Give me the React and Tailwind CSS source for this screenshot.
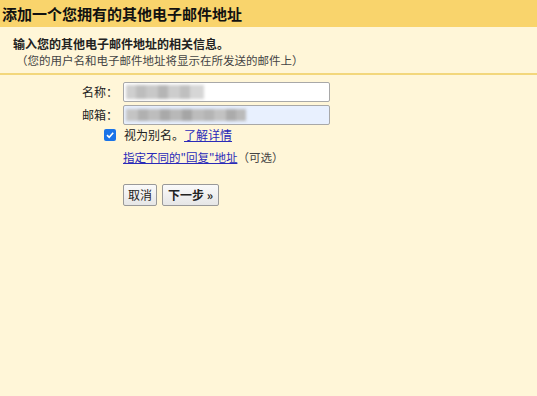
export default function App() {
  return (
    <div
      className="h-[396px] w-[537px] overflow-hidden bg-[#fff6d8] text-[#222]"
      style={{ fontFamily: '"Noto Sans CJK SC", "Liberation Sans", sans-serif' }}
    >
      <div className="flex h-[27px] items-center bg-[#f9d46c] pl-[2px]">
        <h1 className="text-[15px] font-bold leading-none text-[#111]">添加一个您拥有的其他电子邮件地址</h1>
      </div>

      <div className="border-b-2 border-[#f3d77c] pb-[5px] pl-[13px] pt-[9px]">
        <p className="text-[12px] font-bold leading-[16px]">输入您的其他电子邮件地址的相关信息。</p>
        <p className="pl-[3px] text-[11.5px] leading-[16px] text-[#444]">（您的用户名和电子邮件地址将显示在所发送的邮件上）</p>
      </div>

      <div className="flex flex-col pl-[82px] pt-[7px] text-[12px]">
        <div className="flex items-center gap-[5px]">
          <span className="w-[36px] shrink-0 whitespace-nowrap text-right">名称：</span>
          <div className="relative h-[20px] w-[207px] overflow-hidden rounded-[2px] border border-[#a8a8a8] bg-white">
            <div className="flex h-full items-center gap-0 pl-[2px] blur-[1.5px]">
              <span className="h-[14px] w-[10px] bg-[#cfcfcf]" />
              <span className="h-[14px] w-[10px] bg-[#bdbdbd]" />
              <span className="h-[14px] w-[12px] bg-[#c8c8c8]" />
              <span className="h-[14px] w-[10px] bg-[#b5b5b5]" />
              <span className="h-[14px] w-[12px] bg-[#cdcdcd]" />
              <span className="h-[14px] w-[10px] bg-[#bfbfbf]" />
              <span className="h-[14px] w-[14px] bg-[#d6d6d6]" />
            </div>
          </div>
        </div>
        <div className="mt-[3px] flex items-center gap-[5px]">
          <span className="w-[36px] shrink-0 whitespace-nowrap text-right">邮箱：</span>
          <div className="relative h-[20px] w-[207px] overflow-hidden rounded-[2px] border border-[#a8a8a8] bg-[#e8f0fe]">
            <div className="flex h-full items-center pl-[2px] blur-[1.5px]">
              <span className="h-[12px] w-[12px] bg-[#c4c4c4]" />
              <span className="h-[12px] w-[10px] bg-[#b0b0b0]" />
              <span className="h-[12px] w-[12px] bg-[#bdbdbd]" />
              <span className="h-[12px] w-[10px] bg-[#a9a9a9]" />
              <span className="h-[12px] w-[12px] bg-[#b8b8b8]" />
              <span className="h-[12px] w-[10px] bg-[#a5a5a5]" />
              <span className="h-[12px] w-[12px] bg-[#bcbcbc]" />
              <span className="h-[12px] w-[10px] bg-[#b4b4b4]" />
              <span className="h-[12px] w-[12px] bg-[#c2c2c2]" />
              <span className="h-[12px] w-[10px] bg-[#ababab]" />
              <span className="h-[12px] w-[10px] bg-[#bababa]" />
            </div>
          </div>
        </div>

        <div className="ml-[22px] mt-[1px] flex items-center">
          <span className="flex h-[12px] w-[12px] items-center justify-center rounded-[2px] bg-[#1a73e8]">
            <svg width="10" height="10" viewBox="0 0 10 10">
              <path d="M2 5.2 L4.2 7.3 L8.2 2.8" fill="none" stroke="white" strokeWidth="1.6" />
            </svg>
          </span>
          <span className="ml-[8px]">视为别名。</span>
          <a className="text-[#2a2ab8] underline">了解详情</a>
        </div>
        <div className="ml-[41px] mt-[5px] whitespace-nowrap text-[11.5px]">
          <a className="text-[#2a2ab8] underline">指定不同的"回复"地址</a>
          <span className="text-[#444]">（可选）</span>
        </div>

        <div className="ml-[41px] mt-[18px] flex gap-[5px]">
          <button className="h-[22px] rounded-[2px] border border-[#999] bg-gradient-to-b from-[#fafafa] to-[#e6e6e6] px-[4px] text-[12px] leading-none">
            取消
          </button>
          <button className="h-[22px] rounded-[2px] border border-[#999] bg-gradient-to-b from-[#fafafa] to-[#e6e6e6] px-[5px] text-[12px] font-bold leading-none">
            下一步 »
          </button>
        </div>
      </div>
    </div>
  );
}
